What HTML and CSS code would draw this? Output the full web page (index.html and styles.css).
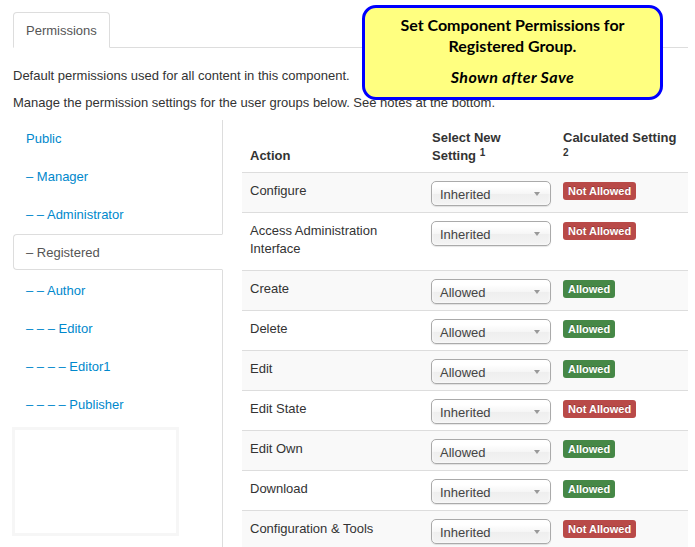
FILE: index.html
```html
<!DOCTYPE html>
<html lang="en">
<head>
<meta charset="utf-8">
<title>Permissions</title>
<link rel="stylesheet" href="styles.css">
</head>
<body>
<div class="page">
  <ul class="tabs">
    <li class="tab active">Permissions</li>
  </ul>
  <p class="intro">Default permissions used for all content in this component.</p>
  <p class="intro">Manage the permission settings for the user groups below. See notes at the bottom.</p>

  <div class="perm">
    <div class="groups">
      <ul class="group-nav">
        <li><a href="#">Public</a></li>
        <li><a href="#">– Manager</a></li>
        <li><a href="#">– – Administrator</a></li>
        <li class="active"><a href="#">– Registered</a></li>
        <li><a href="#">– – Author</a></li>
        <li><a href="#">– – – Editor</a></li>
        <li><a href="#">– – – – Editor1</a></li>
        <li><a href="#">– – – – Publisher</a></li>
      </ul>
      <div class="empty-box"></div>
    </div>

    <div class="table-wrap">
      <table class="perm-table">
        <colgroup>
          <col class="c1"><col class="c2"><col class="c3">
        </colgroup>
        <thead>
          <tr>
            <th>Action</th>
            <th>Select New Setting <sup>1</sup></th>
            <th>Calculated Setting <sup>2</sup></th>
          </tr>
        </thead>
        <tbody>
          <tr class="odd">
            <td>Configure</td>
            <td><div class="select"><span>Inherited</span><i class="arrow"></i></div></td>
            <td><span class="badge no">Not Allowed</span></td>
          </tr>
          <tr>
            <td class="tall">Access Administration Interface</td>
            <td><div class="select"><span>Inherited</span><i class="arrow"></i></div></td>
            <td><span class="badge no">Not Allowed</span></td>
          </tr>
          <tr class="odd">
            <td>Create</td>
            <td><div class="select"><span>Allowed</span><i class="arrow"></i></div></td>
            <td><span class="badge yes">Allowed</span></td>
          </tr>
          <tr>
            <td>Delete</td>
            <td><div class="select"><span>Allowed</span><i class="arrow"></i></div></td>
            <td><span class="badge yes">Allowed</span></td>
          </tr>
          <tr class="odd">
            <td>Edit</td>
            <td><div class="select"><span>Allowed</span><i class="arrow"></i></div></td>
            <td><span class="badge yes">Allowed</span></td>
          </tr>
          <tr>
            <td>Edit State</td>
            <td><div class="select"><span>Inherited</span><i class="arrow"></i></div></td>
            <td><span class="badge no">Not Allowed</span></td>
          </tr>
          <tr class="odd">
            <td>Edit Own</td>
            <td><div class="select"><span>Allowed</span><i class="arrow"></i></div></td>
            <td><span class="badge yes">Allowed</span></td>
          </tr>
          <tr>
            <td>Download</td>
            <td><div class="select"><span>Inherited</span><i class="arrow"></i></div></td>
            <td><span class="badge yes">Allowed</span></td>
          </tr>
          <tr class="odd">
            <td>Configuration &amp; Tools</td>
            <td><div class="select"><span>Inherited</span><i class="arrow"></i></div></td>
            <td><span class="badge no">Not Allowed</span></td>
          </tr>
        </tbody>
      </table>
    </div>
  </div>

  <div class="callout">
    <p class="callout-title">Set Component Permissions for<br>Registered Group.</p>
    <p class="callout-note">Shown after Save</p>
  </div>
</div>
</body>
</html>
```
FILE: styles.css
```css
html, body {
  margin: 0;
  padding: 0;
  background: #fff;
}
body {
  font-family: "Liberation Sans", Arial, sans-serif;
  font-size: 13px;
  line-height: 18px;
  color: #333;
  overflow: hidden;
}
.page {
  position: relative;
  padding: 12px 7px 0 13px;
}
.tabs {
  display: flex;
  margin: 0 0 18px;
  padding: 0;
  list-style: none;
  border-bottom: 1px solid #ddd;
}
.tab {
  padding: 9px 12px 7px;
  line-height: 18px;
  border: 1px solid #ddd;
  border-bottom-color: transparent;
  border-radius: 4px 4px 0 0;
  margin-bottom: -1px;
  background: #fff;
  color: #555;
}
.intro {
  margin: 0 0 9px;
  padding-top: 1px;
  height: 17px;
}
.perm {
  display: flex;
  align-items: stretch;
}
.groups {
  width: 209px;
  flex: none;
  border-right: 1px solid #ddd;
  min-height: 440px;
}
.group-nav {
  list-style: none;
  margin: 0;
  padding: 0;
}
.group-nav li {
  margin-bottom: 2px;
}
.group-nav a {
  display: block;
  padding: 9px 12px 7px;
  line-height: 18px;
  border: 1px solid transparent;
  border-radius: 4px 0 0 4px;
  color: #0088cc;
  text-decoration: none;
}
.group-nav .active a {
  color: #555;
  background: #fff;
  border-color: #ddd;
  border-right-color: #fff;
  margin-right: -1px;
}
.empty-box {
  margin: 5px 0 0 -1px;
  width: 161px;
  height: 103px;
  border: 3px solid #f6f6f6;
}
.table-wrap {
  margin-left: 19px;
  width: 446px;
  flex: none;
}
.perm-table {
  width: 446px;
  border-collapse: separate;
  border-spacing: 0;
  table-layout: fixed;
}
.c1 { width: 182px; }
.c2 { width: 131px; }
.c3 { width: 133px; }
.perm-table th {
  padding: 9px 8px 7px;
  line-height: 18px;
  text-align: left;
  vertical-align: bottom;
  font-weight: bold;
  color: #333;
}
.perm-table sup {
  font-size: 10px;
  line-height: 0;
  vertical-align: 4px;
}
.perm-table td {
  padding: 8px 8px 6px;
  line-height: 18px;
  vertical-align: top;
  border-top: 1px solid #ddd;
}
.perm-table td:first-child {
  padding-top: 9px;
  padding-bottom: 5px;
}
.perm-table td.tall {
  padding-bottom: 12px;
}
.perm-table tr.odd td {
  background: #f9f9f9;
}
.select {
  box-sizing: border-box;
  display: flex;
  align-items: center;
  justify-content: space-between;
  width: 120px;
  height: 25px;
  margin-left: -1px;
  padding: 2px 10px 0 8px;
  border: 1px solid #aaa;
  border-radius: 5px;
  background: linear-gradient(#ffffff 20%, #f6f6f6 50%, #eeeeee 52%, #f4f4f4 100%);
  box-shadow: inset 0 0 3px #fff, 0 1px 1px rgba(0, 0, 0, 0.1);
  color: #444;
  font-size: 13px;
}
.arrow {
  width: 0;
  height: 0;
  margin-top: -1px;
  border-left: 3px solid transparent;
  border-right: 3px solid transparent;
  border-top: 4px solid #999;
}
.badge {
  display: inline-block;
  margin-top: 1px;
  padding: 2px 5px;
  font-size: 11px;
  line-height: 14px;
  font-weight: bold;
  color: #fff;
  border-radius: 3px;
  text-shadow: 0 -1px 0 rgba(0, 0, 0, 0.25);
  white-space: nowrap;
}
.badge.no { background: #b94a48; }
.badge.yes { background: #468847; }

.callout {
  position: absolute;
  left: 362px;
  top: 5px;
  box-sizing: border-box;
  width: 301px;
  height: 95px;
  padding: 6px 2px 0;
  border: 3px solid #0000ff;
  border-radius: 14px;
  background: #ffff80;
  color: #000;
  text-align: center;
  font-family: Lato, "Open Sans", sans-serif;
  font-size: 16px;
  line-height: 21px;
  font-weight: bold;
}
.callout p {
  margin: 0;
}
.callout-note {
  margin-top: 10px !important;
  font-style: italic;
  letter-spacing: 0.4px;
}
```
